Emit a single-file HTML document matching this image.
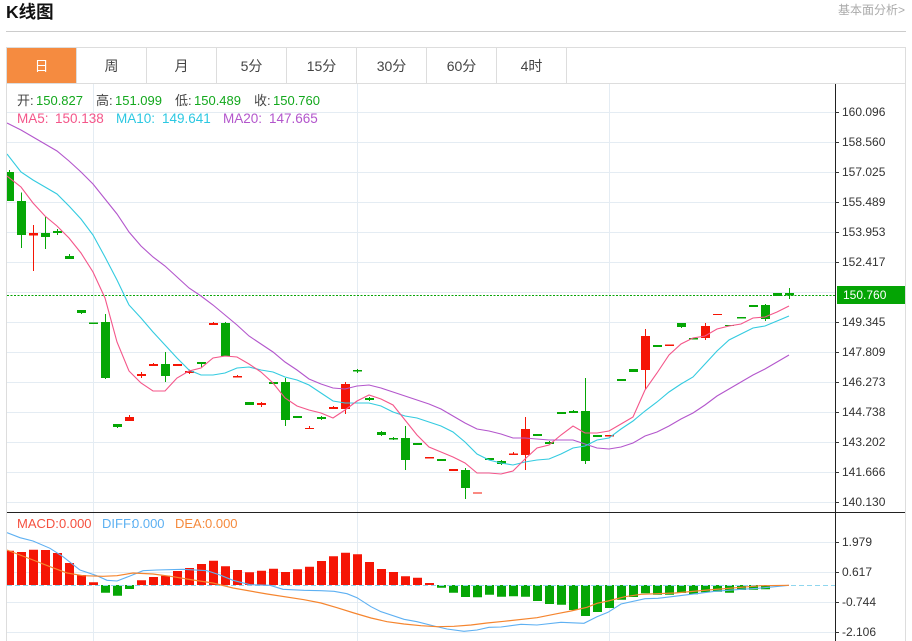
<!DOCTYPE html>
<html lang="zh">
<head>
<meta charset="utf-8">
<title>K线图</title>
<style>
html,body{margin:0;padding:0;background:#fff;width:912px;height:641px;overflow:hidden}
body{position:relative;font-family:"Liberation Sans","Noto Sans CJK SC",sans-serif;color:#333}
.a{position:absolute;white-space:nowrap}
.title{left:6px;top:1px;font-size:17.5px;font-weight:bold;line-height:22px;color:#111}
.more{right:7px;top:2px;font-size:12px;line-height:16px;color:#aaa}
.tab{top:48px;height:35px;width:69px;line-height:36px;text-align:center;font-size:14px;color:#444;border-right:1px solid #ddd}
.tab.on{background:#f58b40;color:#fff;border-right:1px solid #ddd}
.l{font-size:13px;line-height:16px}
.m{font-size:13.5px}
.y{left:842px;font-size:12px;line-height:14px;color:#333}
.g{color:#13a81d}.k{color:#444}.p{color:#f4568a}.c{color:#2cc8e2}.v{color:#b356cc}
.r{color:#f5503f}.b{color:#5cb0f2}.o{color:#f58a3c}
</style>
</head>
<body>
<div class="a title">K线图</div>
<div class="a more">基本面分析&gt;</div>

<svg class="a" style="left:0;top:0" width="912" height="641" viewBox="0 0 912 641">
<defs><clipPath id="cp"><rect x="7" y="84" width="828" height="557"/></clipPath></defs>
<path d="M6 31.5H906" stroke="#ccc" fill="none"/>
<path d="M6.5 641V47.5H905.5V641M6.5 83.5H905.5" stroke="#ddd" fill="none"/>
<!-- grid -->
<path d="M7 112.5H835M7 142.5H835M7 172.5H835M7 202.5H835M7 232.5H835M7 262.5H835M7 292.5H835M7 322.5H835M7 352.5H835M7 382.5H835M7 412.5H835M7 442.5H835M7 472.5H835M7 502.5H835M7 542.5H835M7 572.5H835M7 602.5H835M7 632.5H835M93.5 84V641M357.5 84V641M609.5 84V641" stroke="#e4ecf3" fill="none"/>
<!-- axis -->
<path d="M835.5 84V641M7 512.5H905" stroke="#222" fill="none"/>
<path d="M835 112.5h4M835 142.5h4M835 172.5h4M835 202.5h4M835 232.5h4M835 262.5h4M835 322.5h4M835 352.5h4M835 382.5h4M835 412.5h4M835 442.5h4M835 472.5h4M835 502.5h4M835 542.5h4M835 572.5h4M835 602.5h4M835 632.5h4" stroke="#333" fill="none"/>
<rect x="837" y="286" width="68" height="18" fill="#04a404"/>

<g clip-path="url(#cp)">
<!-- current price -->
<path d="M7 295.5H835" stroke="#06a506" stroke-dasharray="2 1.5" fill="none"/>
<!-- green wicks -->
<path d="M9.5 170V201M21.5 192.5V248M45.5 217V249M57.5 229V235M69.5 254V259M81.5 310V314M105.5 314V379M117.5 424V428M165.5 352V382M201.5 362V367M225.5 322V356M285.5 378V426M321.5 416V420M357.5 369V373M369.5 397V401M381.5 431V436M393.5 437V440M405.5 426V470M465.5 468V499M501.5 460V465M549.5 441V444M573.5 410V413M585.5 378V464M681.5 323V328M765.5 304V321M789.5 288V299" stroke="#05a605" fill="none"/>
<!-- red wicks -->
<path d="M33.5 225V271M129.5 415V421M141.5 372V378M153.5 363V366M189.5 369.5V374M213.5 322V325M237.5 375V377M261.5 402V407M309.5 426V429M333.5 406V409M345.5 382V414M513.5 452V455M525.5 417V470M645.5 329V389M705.5 323V340" stroke="#f51505" fill="none"/>
<!-- green bodies -->
<path fill="#05a605" d="M5 172h9v29h-9zM17 201h9v34h-9zM41 233h9v4h-9zM53 231h9v2h-9zM65 256h9v3h-9zM77 310h9v3h-9zM89 322.5h9v1.5h-9zM101 322h9v56h-9zM113 424h9v3h-9zM161 364h9v12h-9zM197 362h9v2h-9zM221 323h9v33h-9zM245 402h9v3h-9zM269 382h9v2h-9zM281 382h9v38h-9zM293 416h9v2h-9zM317 417h9v2h-9zM353 370h9v1.5h-9zM365 398h9v2h-9zM377 432h9v3h-9zM389 438h9v1.5h-9zM401 438h9v22h-9zM413 443h9v2h-9zM437 459h9v2h-9zM461 470h9v18h-9zM485 458h9v2h-9zM497 461h9v3h-9zM533 434h9v2h-9zM545 442h9v2h-9zM557 412h9v2h-9zM569 411h9v2h-9zM581 411h9v50h-9zM593 435h9v2h-9zM617 379h9v2h-9zM629 369h9v3h-9zM653 345h9v2h-9zM677 323h9v4h-9zM689 338h9v1.5h-9zM725 325h9v1h-9zM737 317h9v1.5h-9zM749 305h9v2h-9zM761 305h9v14h-9zM773 293h9v3h-9zM785 293h9v2.5h-9z"/>
<!-- red bodies -->
<path fill="#f51505" d="M29 233h9v2.5h-9zM125 417h9v4h-9zM137 374h9v2h-9zM149 364h9v2h-9zM173 364h9v2h-9zM185 371h9v2h-9zM209 323h9v2h-9zM233 376h9v1.5h-9zM257 403h9v2h-9zM305 428h9v1h-9zM329 407h9v2h-9zM341 384h9v25h-9zM425 457h9v1.5h-9zM449 469h9v2h-9zM473 492.5h9v1h-9zM509 453.5h9v1.5h-9zM521 429h9v26h-9zM605 435h9v1.5h-9zM641 336h9v34h-9zM665 344.5h9v1.5h-9zM701 326h9v12h-9zM713 314h9v1h-9z"/>
<!-- MA20 -->
<path fill="none" stroke="#b356cc" stroke-width="1.1" d="M7 123L21 130L33 137L45 144L57 151L69 161L81 172L93 184L105 199L117 214L129 232L141 246L153 257L165 266L177 277L189 288L201 296L213 305L225 315L237 325L249 336L261 344L273 352L285 362L297 370L309 379L321 384L333 388L345 389L357 386L369 385L381 388L393 392L405 396L417 400L429 404L441 409L453 416L465 423L477 429L489 431L501 434L513 438L525 438L537 439L549 440L561 440L573 440L585 444L597 448L609 449L621 447L633 443L645 436L657 432L669 426L681 419L693 413L705 405L717 396L729 389L741 382L753 375L765 369L777 362L789 355"/>
<!-- MA10 -->
<path fill="none" stroke="#33cbe0" stroke-width="1.1" d="M7 154L21 172L33 180L45 187L57 194L69 206L81 219L93 235L105 257L117 280L129 305L141 318L153 332L165 345L177 358L189 370L201 375L213 375L225 373L237 368L249 367L261 370L273 372L285 377L297 380L309 385L321 393L333 401L345 403L357 403L369 403L381 406L393 412L405 416L417 418L429 422L441 426L453 432L465 442L477 454L489 460L501 463L513 465L525 462L537 460L549 459L561 454L573 448L585 446L597 440L609 438L621 429L633 421L645 411L657 402L669 392L681 384L693 377L705 364L717 351L729 340L741 334L753 328L765 326L777 321L789 316"/>
<!-- MA5 -->
<path fill="none" stroke="#f4568a" stroke-width="1.1" d="M7 176L21 187L33 203L45 216L57 226L69 238L81 253L93 272L105 298L117 342L129 371L141 383L153 391L165 391L177 378L189 371L201 368L213 358L225 356L237 357L249 364L261 372L273 383L285 398L297 406L309 410L321 413L333 418L345 410L357 401L369 395L381 399L393 405L405 420L417 435L429 447L441 452L453 457L465 463L477 473L489 473L501 474L513 471L525 459L537 448L549 445L561 435L573 426L585 433L597 433L609 431L621 424L633 417L645 390L657 373L669 355L681 344L693 338L705 336L717 329L729 326L741 324L753 318L765 317L777 312L789 306"/>

<!-- MACD red -->
<path fill="#f51505" d="M5 550.7h9V585h-9zM17 552h9V585h-9zM29 549.7h9V585h-9zM41 550h9V585h-9zM53 553h9V585h-9zM65 563h9V585h-9zM77 575h9V585h-9zM89 582.3h9V585h-9zM137 580.3h9V585h-9zM149 577h9V585h-9zM161 575.7h9V585h-9zM173 571h9V585h-9zM185 568h9V585h-9zM197 564h9V585h-9zM209 560.7h9V585h-9zM221 566.3h9V585h-9zM233 570h9V585h-9zM245 572.3h9V585h-9zM257 570.7h9V585h-9zM269 568.7h9V585h-9zM281 572h9V585h-9zM293 569.3h9V585h-9zM305 566.7h9V585h-9zM317 561h9V585h-9zM329 556.3h9V585h-9zM341 552.7h9V585h-9zM353 554.3h9V585h-9zM365 562h9V585h-9zM377 569h9V585h-9zM389 572h9V585h-9zM401 576.3h9V585h-9zM413 577.7h9V585h-9zM425 583h9V585h-9z"/>
<!-- MACD green -->
<path fill="#05a605" d="M101 585h9v7.7h-9zM113 585h9v10.7h-9zM125 585h9v4h-9zM437 585h9v2.7h-9zM449 585h9v7.7h-9zM461 585h9v12h-9zM473 585h9v12.3h-9zM485 585h9v9.7h-9zM497 585h9v11.7h-9zM509 585h9v11.3h-9zM521 585h9v11.7h-9zM533 585h9v16h-9zM545 585h9v19h-9zM557 585h9v19.7h-9zM569 585h9v25h-9zM581 585h9v31h-9zM593 585h9v27h-9zM605 585h9v23h-9zM617 585h9v14.7h-9zM629 585h9v12h-9zM641 585h9v8.3h-9zM653 585h9v9.7h-9zM665 585h9v9.7h-9zM677 585h9v8h-9zM689 585h9v9.3h-9zM701 585h9v7.3h-9zM713 585h9v6.7h-9zM725 585h9v7.7h-9zM737 585h9v5h-9zM749 585h9v4.7h-9zM761 585h9v4.3h-9z"/>
<path d="M7 585.5H835" stroke="#8fd6ee" stroke-dasharray="5 3" fill="none"/>
<!-- DIFF -->
<path fill="none" stroke="#5eb0f2" stroke-width="1.1" d="M7 532.7L20 537.7L33 541L50 548.3L63 556.7L80 570L97 575.7L107 580.3L117 581L130 576L143 570.7L157 570L183 569.3L207 570.7L220 575L233 580.3L250 584.7L270 585.3L283 589.3L304 590.3L321 590.7L334 591.3L347 593.7L357 597.7L371 606.7L381 611.7L404 619.3L417 621.7L434 626L447 629L464 631.3L477 630L489 627.3L501 627L521 624.3L537 625L561 622.3L584 623.3L597 616.7L608 612.3L621 604L645 598.7L658 598.3L691 594.3L715 591.3L741 589.3L758 588.3L789 585.3"/>
<!-- DEA -->
<path fill="none" stroke="#f5852f" stroke-width="1.2" d="M7 550L20 555L33 560L50 566.7L67 573L83 575.7L103 576.3L117 575.7L133 573L153 574L173 576.7L193 580L213 583L233 588L267 594L304 599.7L321 603L337 607.7L354 613L371 618L387 621.7L404 624L421 625.7L437 626.7L454 626.3L471 625L487 623L504 621.3L537 617.7L557 613.7L571 611L587 607.3L597 603.3L608 601L625 596.7L641 594.3L675 593L708 590L741 587.3L761 585.7L789 585.3"/>
</g>
</svg>

<div class="a tab on" style="left:7px;width:69px">日</div>
<div class="a tab" style="left:77px">周</div>
<div class="a tab" style="left:147px">月</div>
<div class="a tab" style="left:217px">5分</div>
<div class="a tab" style="left:287px">15分</div>
<div class="a tab" style="left:357px">30分</div>
<div class="a tab" style="left:427px">60分</div>
<div class="a tab" style="left:497px">4时</div>

<span class="a l k" style="left:17px;top:93px">开:</span><span class="a l g" style="left:36px;top:93px">150.827</span>
<span class="a l k" style="left:96px;top:93px">高:</span><span class="a l g" style="left:115px;top:93px">151.099</span>
<span class="a l k" style="left:175px;top:93px">低:</span><span class="a l g" style="left:194px;top:93px">150.489</span>
<span class="a l k" style="left:254px;top:93px">收:</span><span class="a l g" style="left:273px;top:93px">150.760</span>

<span class="a l m p" style="left:17px;top:111px">MA5:</span><span class="a l m p" style="left:55px;top:111px">150.138</span>
<span class="a l m c" style="left:116px;top:111px">MA10:</span><span class="a l m c" style="left:162px;top:111px">149.641</span>
<span class="a l m v" style="left:223px;top:111px">MA20:</span><span class="a l m v" style="left:269px;top:111px">147.665</span>

<span class="a l r" style="left:17px;top:516px">MACD:</span><span class="a l r" style="left:59px;top:516px">0.000</span>
<span class="a l b" style="left:102px;top:516px">DIFF:</span><span class="a l b" style="left:132px;top:516px">0.000</span>
<span class="a l o" style="left:175px;top:516px">DEA:</span><span class="a l o" style="left:205px;top:516px">0.000</span>

<span class="a y" style="top:105px">160.096</span>
<span class="a y" style="top:135px">158.560</span>
<span class="a y" style="top:165px">157.025</span>
<span class="a y" style="top:195px">155.489</span>
<span class="a y" style="top:225px">153.953</span>
<span class="a y" style="top:255px">152.417</span>
<span class="a y" style="left:843px;top:288px;color:#fff">150.760</span>
<span class="a y" style="top:315px">149.345</span>
<span class="a y" style="top:345px">147.809</span>
<span class="a y" style="top:375px">146.273</span>
<span class="a y" style="top:405px">144.738</span>
<span class="a y" style="top:435px">143.202</span>
<span class="a y" style="top:465px">141.666</span>
<span class="a y" style="top:495px">140.130</span>
<span class="a y" style="top:535px">1.979</span>
<span class="a y" style="top:565px">0.617</span>
<span class="a y" style="top:595px">-0.744</span>
<span class="a y" style="top:625px">-2.106</span>
</body>
</html>
